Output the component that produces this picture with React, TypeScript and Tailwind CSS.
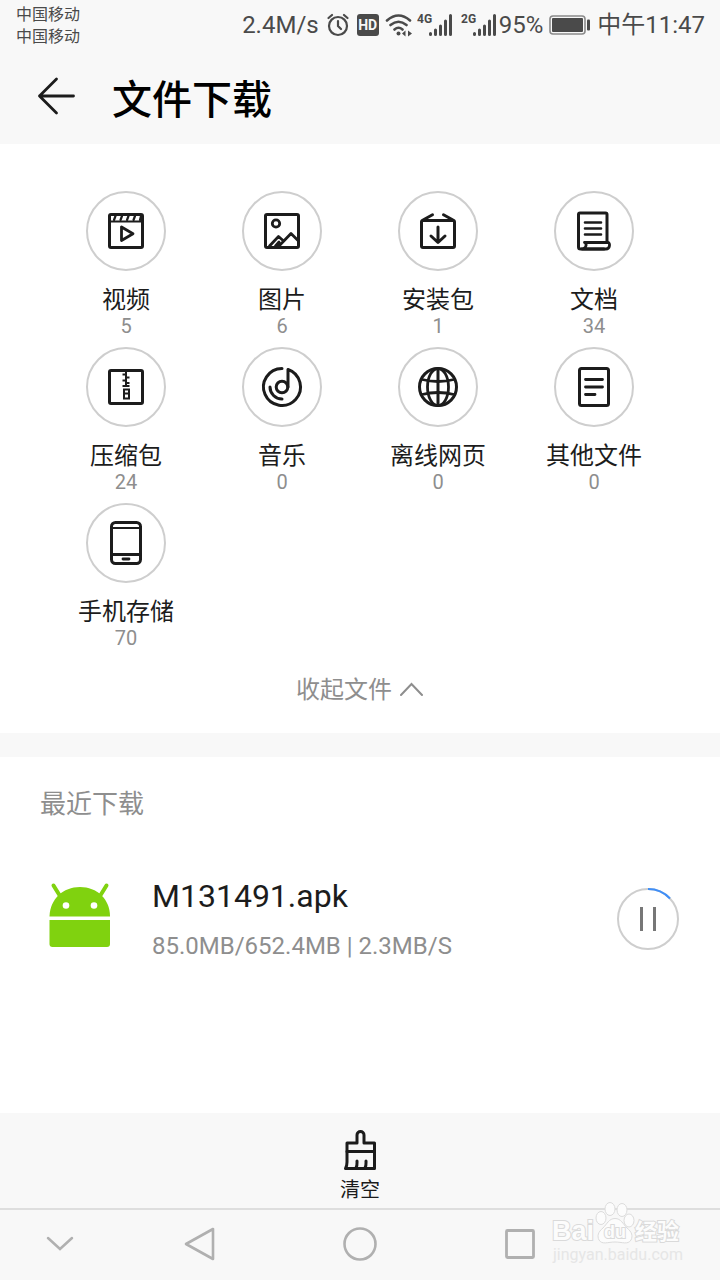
import React from 'react';

interface Category {
  name: string;
  count: number;
  icon: React.ReactNode;
}

const Icon: React.FC<{ children: React.ReactNode }> = ({ children }) => (
  <svg
    viewBox="0 0 48 48"
    className="w-12 h-12"
    fill="none"
    stroke="#1c1c1c"
    strokeWidth="3"
    strokeLinecap="round"
    strokeLinejoin="round"
    aria-hidden="true"
  >
    {children}
  </svg>
);

const VideoIcon = () => (
  <Icon>
    <rect x="7.5" y="7.5" width="33" height="33" rx="1.5" />
    <path d="M8 14.5H40" strokeWidth="2" />
    <path d="M13.5 9L12 13M20 9L18.5 13M26.5 9L25 13M33 9L31.5 13M39 9L38 13" strokeWidth="2.2" />
    <path d="M19.5 20V33.5L31 26.8Z" strokeWidth="2.8" />
  </Icon>
);

const ImageIcon = () => (
  <Icon>
    <rect x="7.5" y="7.5" width="33" height="33" rx="1.5" />
    <circle cx="18" cy="16.5" r="3.7" strokeWidth="2.8" />
    <path d="M11.5 39L20.5 29.5L24.5 33M17.5 39L21 35M20.5 39.5L33 26.5L40 33.5" strokeWidth="2.8" />
  </Icon>
);

const PackageIcon = () => (
  <Icon>
    <rect x="7.5" y="13.5" width="33" height="27" rx="1.5" />
    <path d="M9 13L18.5 7.8M39 13L29.5 7.8" />
    <path d="M24 20V34.5M17 29L24 35.5L31 29" />
  </Icon>
);

const DocIcon = () => (
  <Icon>
    <path d="M37 35V7.5A1.5 1.5 0 0 0 35.5 6H10A1.5 1.5 0 0 0 8.5 7.5V40A2 2 0 0 0 10.5 42H34" />
    <path d="M14.500 35.500H38c2.300 0 2.300 6.500-2 6.500H12M14.500 35.500c2.500 1 2 5-1 6" strokeWidth="2.8" />
    <path d="M15 15.5H31M15 21.500H31M15 27.500H31" strokeWidth="2.6" />
  </Icon>
);

const ZipIcon = () => (
  <Icon>
    <rect x="7.5" y="7.5" width="33" height="33" rx="1.5" />
    <g strokeWidth="2" strokeLinecap="butt" strokeLinejoin="miter">
      <path d="M24 9V24M20.5 11.5H24M24 14.500H27.500M20.500 17.500H24M24 20H27.500M20.500 23H24" />
      <path d="M24 23H27.500M22 26.500H27V35.500H22ZM22 30.500H27" />
    </g>
  </Icon>
);

const MusicIcon = () => (
  <Icon>
    <path d="M24 5.500A18.500 18.500 0 1 0 30 6.500V24" />
    <circle cx="24" cy="24" r="5.8" />
    <path d="M12 24A12 12 0 0 0 24 36" />
  </Icon>
);

const GlobeIcon = () => (
  <Icon>
    <circle cx="24" cy="24" r="18.5" />
    <path d="M24 6V42" />
    <ellipse cx="24" cy="24" rx="10.5" ry="18.5" strokeWidth="2.8" />
    <path d="M8 16.500Q24 20.500 40 16.500M8 31.500Q24 27.500 40 31.500" strokeWidth="2.8" />
  </Icon>
);

const FileIcon = () => (
  <Icon>
    <rect x="9.5" y="5.5" width="29" height="37" rx="2" />
    <path d="M15.500 16.500H32.500M15.500 24H32.500M15.500 31.500H25" strokeWidth="2.8" />
  </Icon>
);

const PhoneIcon = () => (
  <Icon>
    <rect x="9.5" y="3.5" width="29" height="41" rx="4" />
    <path d="M10 9H38" strokeWidth="2.2" />
    <path d="M10 35.500H38" strokeWidth="2.8" />
    <path d="M21 40H27" strokeWidth="2.8" />
  </Icon>
);

const categories: Category[] = [
  { name: '视频', count: 5, icon: <VideoIcon /> },
  { name: '图片', count: 6, icon: <ImageIcon /> },
  { name: '安装包', count: 1, icon: <PackageIcon /> },
  { name: '文档', count: 34, icon: <DocIcon /> },
  { name: '压缩包', count: 24, icon: <ZipIcon /> },
  { name: '音乐', count: 0, icon: <MusicIcon /> },
  { name: '离线网页', count: 0, icon: <GlobeIcon /> },
  { name: '其他文件', count: 0, icon: <FileIcon /> },
  { name: '手机存储', count: 70, icon: <PhoneIcon /> },
];

const Signal: React.FC<{ label: string }> = ({ label }) => (
  <svg viewBox="0 0 36 24" className="w-9 h-6" aria-label={label}>
    <text x="0" y="10" fontSize="12" fontWeight="700" fill="#4a4a4a">
      {label}
    </text>
    <path
      d="M13.5 20.5V21.5M18.5 17V21.5M23.5 13V21.5M28.5 8V21.5M33.5 2.5V21.5"
      stroke="#4a4a4a"
      strokeWidth="3"
      strokeLinecap="round"
    />
  </svg>
);

const StatusBar = () => (
  <div className="flex h-12 justify-between pl-4 pr-[15px] text-[#4a4a4a]">
    <div className="flex flex-col pt-1 text-[16px] leading-[22px]">
      <span>中国移动</span>
      <span>中国移动</span>
    </div>
    <div className="flex items-center pt-0.5 text-2xl">
      <span className="mr-2">2.4M/s</span>
      <svg viewBox="0 0 22 24" className="mr-2 w-[22px] h-6" fill="none" stroke="#4a4a4a" strokeWidth="2.2" strokeLinecap="round">
        <circle cx="11" cy="13" r="9" />
        <path d="M11 8V13L14 16M1.5 5L5 2M20.5 5L17 2" />
      </svg>
      <span className="mr-1.5 flex h-[22px] w-[22px] items-center justify-center rounded-[3px] bg-[#4a4a4a] text-sm font-bold text-[#f8f8f8]">
        HD
      </span>
      <svg viewBox="0 0 28 24" className="mr-1 w-7 h-6" fill="none" stroke="#4a4a4a" strokeWidth="2.6" strokeLinecap="round">
        <path d="M2 7.500Q13.500-2.500 25 7.500M5.500 12Q13.500 5.500 21.500 12M9.500 16.500Q13.500 13 17.500 16.500" />
        <circle cx="13.5" cy="20.5" r="2" fill="#4a4a4a" stroke="none" />
        <path d="M17 20.500L20.500 17.500V23.500ZM27 20.500L23 17.500V23.500Z" fill="#4a4a4a" stroke="none" />
      </svg>
      <span className="mr-2 flex"><Signal label="4G" /></span>
      <span className="mr-0.5 flex"><Signal label="2G" /></span>
      <span className="mr-1.5">95%</span>
      <svg viewBox="0 0 42 22" className="mr-1.5 w-[42px] h-[22px]">
        <rect x="1" y="2" width="35" height="18" rx="3" fill="none" stroke="#8a8a8a" strokeWidth="1.6" />
        <rect x="3" y="4" width="31" height="14" rx="1" fill="#4a4a4a" />
        <rect x="38" y="5.5" width="3" height="11" rx="1" fill="#4a4a4a" />
      </svg>
      <span>中午11:47</span>
    </div>
  </div>
);

const CategoryButton: React.FC<{ category: Category }> = ({ category }) => (
  <button type="button" className="flex flex-col items-center">
    <span className="flex h-20 w-20 items-center justify-center rounded-full border-2 border-[#cecece]">
      {category.icon}
    </span>
    <span className="mt-3.5 text-2xl leading-[30px] text-[#1c1c1c]">{category.name}</span>
    <span className="text-[20px] leading-[22px] text-[#8e8e8e]">{category.count}</span>
  </button>
);

const AndroidIcon = () => (
  <svg viewBox="0 0 64 68" className="w-16 h-[68px]" aria-hidden="true">
    <path d="M5.5 3.5L12 14M58.5 3.5L52 14" stroke="#80d20f" strokeWidth="4" strokeLinecap="round" />
    <path d="M1.5 34.5C2 17 15 5 32 5S62 17 62 34.5Z" fill="#80d20f" />
    <path d="M1.5 38H62V62a3 3 0 0 1-3 3H4.500a3 3 0 0 1-3-3Z" fill="#80d20f" />
    <circle cx="18" cy="23.5" r="3.3" fill="#fff" />
    <circle cx="46" cy="23.5" r="3.3" fill="#fff" />
  </svg>
);

const Watermark = () => (
  <svg viewBox="0 0 136 68" className="absolute right-8 bottom-3 h-[68px] w-[136px]" aria-hidden="true">
    <g fill="#fcfcfc" stroke="#dcdcdc" strokeWidth="1">
      <ellipse cx="58" cy="9" rx="5" ry="6.5" />
      <ellipse cx="70" cy="10" rx="5" ry="6.5" />
      <ellipse cx="49" cy="18" rx="5" ry="6.5" />
      <ellipse cx="77" cy="20.5" rx="5" ry="6.5" />
      <path d="M63 18.500C69 18.500 71 24 75 28C80 32 81 36 79 40C76 45 70 42 63 42C56 42 50 45 47 40C45 36 46 32 51 28C55 24 57 18.500 63 18.500Z" />
    </g>
    <g
      fill="#fcfcfc"
      stroke="#dadada"
      strokeWidth="2"
      paintOrder="stroke"
      fontWeight="700"
      fontFamily="'Liberation Sans', 'Noto Sans CJK SC', sans-serif"
    >
      <text x="0" y="40" fontSize="27">Bai</text>
      <text x="52" y="38" fontSize="18">du</text>
      <text x="83" y="39" fontSize="22">经验</text>
    </g>
    <text x="1" y="60" fontSize="16" fill="#e6e6e6">
      jingyan.baidu.com
    </text>
  </svg>
);

export default function App() {
  return (
    <div className="relative flex min-h-screen flex-col bg-white font-[Roboto,'Noto_Sans_CJK_SC',sans-serif]">
      <header className="bg-[#f8f8f8]">
        <StatusBar />
        <div className="flex h-24 items-center pl-9">
          <button type="button" aria-label="返回">
            <svg viewBox="0 0 40 40" className="w-10 h-10" fill="none" stroke="#1c1c1c" strokeWidth="2.8" strokeLinecap="round" strokeLinejoin="round">
              <path d="M37.5 20H3.5M20.500 3L3.500 20L20.500 37" />
            </svg>
          </button>
          <h1 className="ml-9 pt-2.5 text-[40px] leading-[60px] font-medium text-black">文件下载</h1>
        </div>
      </header>

      <section className="px-12 pt-[47px] pb-5">
        <div className="grid grid-cols-4 gap-y-2.5">
          {categories.map((c) => (
            <CategoryButton key={c.name} category={c} />
          ))}
        </div>
        <button type="button" className="mx-auto mt-[18px] flex h-[46px] items-center gap-2 text-2xl text-[#8e8e8e]">
          收起文件
          <svg viewBox="0 0 24 24" className="w-6 h-6" fill="none" stroke="#8e8e8e" strokeWidth="2" strokeLinecap="round">
            <path d="M1 17L11.5 6L22 17" />
          </svg>
        </button>
      </section>

      <div className="h-6 bg-[#f8f8f8]" />

      <section className="flex-1 px-10 pt-7">
        <h2 className="text-[26px] leading-[38px] text-[#8e8e8e]">最近下载</h2>
        <div className="mt-12 flex items-center">
          <span className="ml-2 pb-2.5"><AndroidIcon /></span>
          <div className="ml-10 flex-1">
            <p className="text-[32px] leading-[50px] text-[#1c1c1c]">M131491.apk</p>
            <p className="text-2xl leading-[50px] text-[#8e8e8e]">85.0MB/652.4MB | 2.3MB/S</p>
          </div>
          <button type="button" aria-label="暂停" className="pb-1">
            <svg viewBox="0 0 64 64" className="w-16 h-16" fill="none" strokeWidth="2">
              <circle cx="32" cy="32" r="30" stroke="#cecece" />
              <path d="M32 2A30 30 0 0 1 54 11.5" stroke="#3f8ef7" />
              <path d="M25.5 20V44M38.5 20V44" stroke="#777" strokeWidth="3" />
            </svg>
          </button>
        </div>
      </section>

      <footer className="bg-[#f8f8f8]">
        <div className="flex h-[95px] justify-center">
          <button type="button" className="flex flex-col items-center pt-4 text-[20px] leading-[34px] text-[#1c1c1c]">
            <svg viewBox="0 0 40 44" className="w-10 h-11" fill="none" stroke="#1c1c1c" strokeWidth="3" strokeLinecap="round" strokeLinejoin="round">
              <path d="M17 14V6a3.500 3.500 0 0 1 7 0V14H34.500V39.500H5.500C7 37 7 35 7 33V14Z" />
              <path d="M7 22.500H34.500M16 39C17.500 36 17 34 17 32M25 39C26.500 36 26 34 26 32" />
            </svg>
            清空
          </button>
        </div>
        <nav className="grid h-[72px] grid-cols-[120px_1fr_1fr_1fr_120px] items-center justify-items-center border-t-2 border-[#dedede] pb-0.5">
          <button type="button" aria-label="隐藏导航栏">
            <svg viewBox="0 0 28 16" className="w-7 h-4" fill="none" stroke="#b0b0b0" strokeWidth="2.5" strokeLinecap="round">
              <path d="M2 2L14 13L26 2" />
            </svg>
          </button>
          <button type="button" aria-label="返回上一页">
            <svg viewBox="0 0 36 36" className="w-9 h-9" fill="none" stroke="#b0b0b0" strokeWidth="2.6" strokeLinejoin="round">
              <path d="M31 3V33L4 18Z" />
            </svg>
          </button>
          <button type="button" aria-label="主屏幕">
            <svg viewBox="0 0 36 36" className="w-9 h-9" fill="none" stroke="#b0b0b0" strokeWidth="2.6">
              <circle cx="18" cy="18" r="15.5" />
            </svg>
          </button>
          <button type="button" aria-label="最近任务">
            <svg viewBox="0 0 36 36" className="w-9 h-9" fill="none" stroke="#b0b0b0" strokeWidth="2.8">
              <rect x="4.5" y="4.5" width="27" height="27" rx="1" />
            </svg>
          </button>
        </nav>
      </footer>
      <Watermark />
    </div>
  );
}
